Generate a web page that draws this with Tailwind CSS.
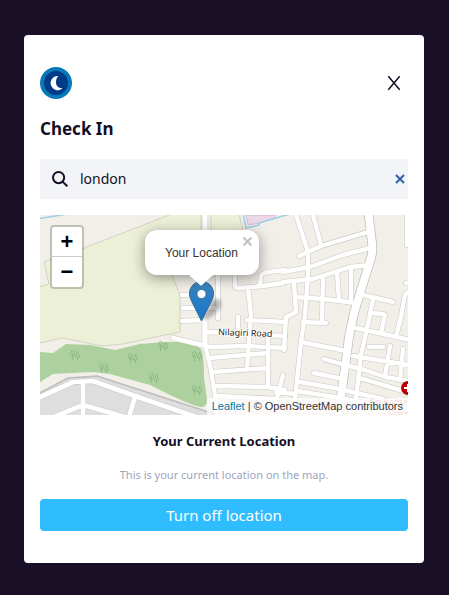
<!DOCTYPE html>
<html lang="en">
<head>
<meta charset="utf-8">
<meta name="viewport" content="width=device-width, initial-scale=1">
<title>Check In</title>
<script src="https://cdn.jsdelivr.net/npm/@tailwindcss/browser@4"></script>
</head>
<body class="min-h-screen bg-[#190f27] pt-[35px] pr-[25px] pb-8 pl-6 font-['Noto_Sans',sans-serif] text-[#140f26]">
<main class="rounded bg-white px-4 py-8">
  <header class="flex items-center justify-between">
    <svg class="size-8" viewBox="0 0 32 32" role="img" aria-label="Logo">
      <circle cx="16" cy="16" r="16" fill="#0779b8"/>
      <circle cx="16" cy="16" r="12" fill="#043b88"/>
      <path d="M18.300 9A7.100 7.100 0 1 0 22.500 21.300Q17.500 21 16.200 17.200Q15.200 12.500 18.300 9Z" fill="#fff"/>
    </svg>
    <button type="button" aria-label="Close" class="flex h-8 w-7 items-center justify-center">
      <svg class="h-4 w-4" viewBox="0 0 16 16" fill="none" stroke="#140f26" stroke-width="1.500"><path d="M2.300 1.300l11.400 13.400M13.700 1.300L2.300 14.700"/></svg>
    </button>
  </header>
  <h1 class="mt-4 text-[17px] leading-7 font-bold">Check In</h1>
  <div class="mt-4 flex h-10 items-center bg-[#f2f4f8] pl-3">
    <label for="place" aria-label="Search location">
      <svg class="size-4" viewBox="0 0 16 16" fill="none" stroke="#140f26" stroke-width="2"><circle cx="6.600" cy="6.600" r="5.600"/><path d="M10.600 10.600L15.300 15.300"/></svg>
    </label>
    <input id="place" type="text" value="london" class="ml-3 min-w-0 flex-1 bg-transparent text-sm outline-none">
    <button type="button" aria-label="Clear" class="flex h-10 w-4 items-center justify-center">
      <svg class="size-[10px]" viewBox="0 0 10 10" fill="none" stroke="#3662a8" stroke-width="2.200"><path d="M1 1l8 8M9 1L1 9"/></svg>
    </button>
  </div>

  <section aria-label="Map" class="relative mt-4 h-[200px] overflow-hidden bg-[#f2efe9] font-['Liberation_Sans',Arial,sans-serif]">
    <svg class="h-full w-full" viewBox="0 0 368 200" preserveAspectRatio="xMinYMin slice" aria-hidden="true">
      <defs>
        <g id="trees" fill="none" stroke="#86b67d" stroke-width=".8"><ellipse cx="2.500" cy="3.500" rx="2" ry="3"/><path d="M2.500 3v7M7.500 1l-2.200 6h4.400zM7.500 7v3"/></g>
        <g id="streets" fill="none" stroke-linecap="round" stroke-linejoin="round">
          <path d="M178 60V103M165 107V130L170 150L175 180L177 204M142 80H152M143 93H175M142 106L163 105M133 123L170 132L207 131L245 133M198 102V117M167 117L245 121M207 105L245 107M208 73L211 100L207 153M195 58V70Q195 73 199 73L223 71L243 68M220 70L221 61Q222 58 228 57L245 55M170 143L228 138M173 157L228 153M228 135V170M175 171L227 172L245 175M178 181L237 184M243 160L234 195M228 120V134"/>
          <path d="M256 0L268 37V60L265 100L261 127L253 204M273 0L281 30M259 41L281 31L328 17M243 57L270 52L303 40L330 33M243 67L273 64L310 52L330 50M254 68L256 97L246 102L244 135M283 62L282 107M297 58L299 85M311 52V87M255 82L283 84L316 88M323 80L353 87M333 85L330 98L343 99M367 -4V30M366 68H372M372 77Q365 76 364 84L360 108"/>
          <path d="M263 107L286 108M261 127L306 136M313 141L370 150M284 144L305 150L325 155L345 162L370 166M274 158L303 164M320 163L370 178M260 167L300 174L325 180L370 190M257 176L300 183L325 188M236 177L255 179M316 113L370 125M330 100L321 140L315 193M345 100L341 118M360 105L356 122M329 132H343M350 131L345 161M363 134L360 165"/>
        </g>
      </defs>
      <path d="M206 0L208 10L220 8L235 3V0Z" fill="#ead7e7" stroke="#cdb5ce" stroke-width=".8"/>
      <path d="M0 3.500L27 -1M203 -2L206 13L219 10V8L250 -1" fill="none" stroke="#9bcfe4" stroke-width="1.500"/>
      <g fill="#ecf0d7" stroke="#cccbb8" stroke-width=".8">
        <path d="M-1 72L9 69L4 47L44 33L132 -1H161V50L132 60L140 80V117L125 120L83 129L62 131L23 123L-1 128Z"/>
        <path d="M171 -1H199L203 15L171 18Z"/>
      </g>
      <path d="M0 137L13 138L26 129L50 130L75 135L100 129L125 127L140 127Q158 130 161 134Q164 139 164 163L167 185Q167 193 160 192Q145 188 120 175L110 170L70 159L53 157L13 159L0 167Z" fill="#add19e"/>
      <use href="#trees" x="30" y="135"/><use href="#trees" x="59" y="148"/><use href="#trees" x="88" y="138"/><use href="#trees" x="109" y="158"/><use href="#trees" x="118" y="126"/><use href="#trees" x="152" y="136"/><use href="#trees" x="152" y="170"/>
      <path d="M-2 179L28 163L57 161L125 183L178 200V202H-2Z" fill="#dedede" stroke="#bcbcbc" stroke-width="1.500"/>
      <g fill="none" stroke-linejoin="round">
        <path d="M-2 183L33 167L53 166L95 181L165 205M43 168V202M14 202L43 190L85 202M95 182L89 202" stroke="#c9c9c9" stroke-width="5.800"/>
        <path d="M-2 183L33 167L53 166L95 181L165 205M43 168V202M14 202L43 190L85 202M95 182L89 202" stroke="#fff" stroke-width="4.700"/>
      </g>
      <use href="#streets" stroke="#cbc9c6" stroke-width="5.500"/>
      <path d="M165 -2V50M165 104V130" fill="none" stroke="#cbc9c6" stroke-width="6.400"/>
      <path d="M328.500 -2L332 28Q333 36 331 43L321 75L314 98L309 122L302 175L298 204" fill="none" stroke="#bcbab7" stroke-width="9.400"/>
      <use href="#streets" stroke="#fff" stroke-width="4.400"/>
      <path d="M165 -2V50M165 104V130" stroke="#fff" stroke-width="5.200"/>
      <path d="M328.500 -2L332 28Q333 36 331 43L321 75L314 98L309 122L302 175L298 204" fill="none" stroke="#fff" stroke-width="8"/>
      <text x="178" y="120" transform="rotate(2 178 120)" font-family="Noto Sans, sans-serif" font-size="9" fill="#222" stroke="#fff" stroke-width="2" paint-order="stroke">Nilagiri Road</text>
      <g font-family="Noto Sans, sans-serif" font-size="9" fill="#e47f7f"><text x="330" y="190">Sri Rama</text><text x="348" y="202">Hosp</text></g>
      <circle cx="368" cy="173" r="7" fill="#bf0000"/><path d="M364 173H372M368 169V177" stroke="#fff" stroke-width="2"/>
    </svg>

    <div class="absolute top-[10px] left-[10px] flex flex-col overflow-hidden rounded border-2 border-black/20 bg-white bg-clip-padding text-[22px] leading-[30px] font-bold text-black">
      <button type="button" aria-label="Zoom in" class="h-[30px] w-[30px] border-b border-[#ccc]">+</button>
      <button type="button" aria-label="Zoom out" class="h-[30px] w-[30px]">−</button>
    </div>

    <svg class="absolute top-[66px] left-[149px] h-[41px] w-[45px]" viewBox="0 0 45 41" aria-hidden="true">
      <defs><linearGradient id="pin" x2="0" y2="1"><stop stop-color="#3c85ba"/><stop offset=".6" stop-color="#247bc7"/><stop offset="1" stop-color="#1d74c4"/></linearGradient><filter id="soft"><feGaussianBlur stdDeviation="2"/></filter></defs>
      <path d="M13 40L23 20Q32 14 32 24Q30 32 13 40Z" fill="#000" opacity=".3" filter="url(#soft)"/>
      <path d="M12.500 .5C5.500 .5 .5 6 .5 12.500C.5 16 2 19 3.500 22L12.500 40L21.500 22C23 19 24.500 16 24.500 12.500C24.500 6 19.500 .5 12.500 .5Z" fill="url(#pin)" stroke="#2e6c97"/>
      <circle cx="12.500" cy="13" r="4.500" fill="#fff" stroke="#2e6c97" stroke-width=".8"/>
    </svg>

    <div role="dialog" aria-label="Location" class="absolute top-[15px] left-[105px] flex h-[45px] w-[114px] items-center rounded-xl bg-white pl-5 text-xs text-[#333] shadow-[0_3px_14px_rgba(0,0,0,0.4)]">
      <p class="whitespace-nowrap">Your Location</p>
      <button type="button" aria-label="Close popup" class="absolute top-0 right-0 flex size-[23px] items-center justify-center">
        <svg class="size-[9px]" viewBox="0 0 9 9" stroke="#c3c3c3" stroke-width="2.200"><path d="M.5 .5l8 8M8.500 .5l-8 8"/></svg>
      </button>
      <svg class="absolute top-full left-[44px] h-[11px] w-[24px]" viewBox="0 0 24 11" aria-hidden="true"><path d="M0 0H24L13 10Q12 11 11 10Z" fill="#fff"/></svg>
    </div>

    <p class="absolute right-0 bottom-0 bg-white/70 px-[5px] text-[11px] leading-[17px] whitespace-nowrap text-[#333]"><a href="#" class="text-[#0078a8]">Leaflet</a> | © OpenStreetMap contributors</p>
  </section>

  <h2 class="mt-4 text-center text-[13px] leading-5 font-bold">Your Current Location</h2>
  <p class="mt-4 text-center text-[11px] leading-4 text-[#a0a3bd]">This is your current location on the map.</p>
  <button type="button" class="mt-4 h-8 w-full rounded bg-[#2fbdff] text-[15px] leading-6 text-white">Turn off location</button>
</main>
</body>
</html>
